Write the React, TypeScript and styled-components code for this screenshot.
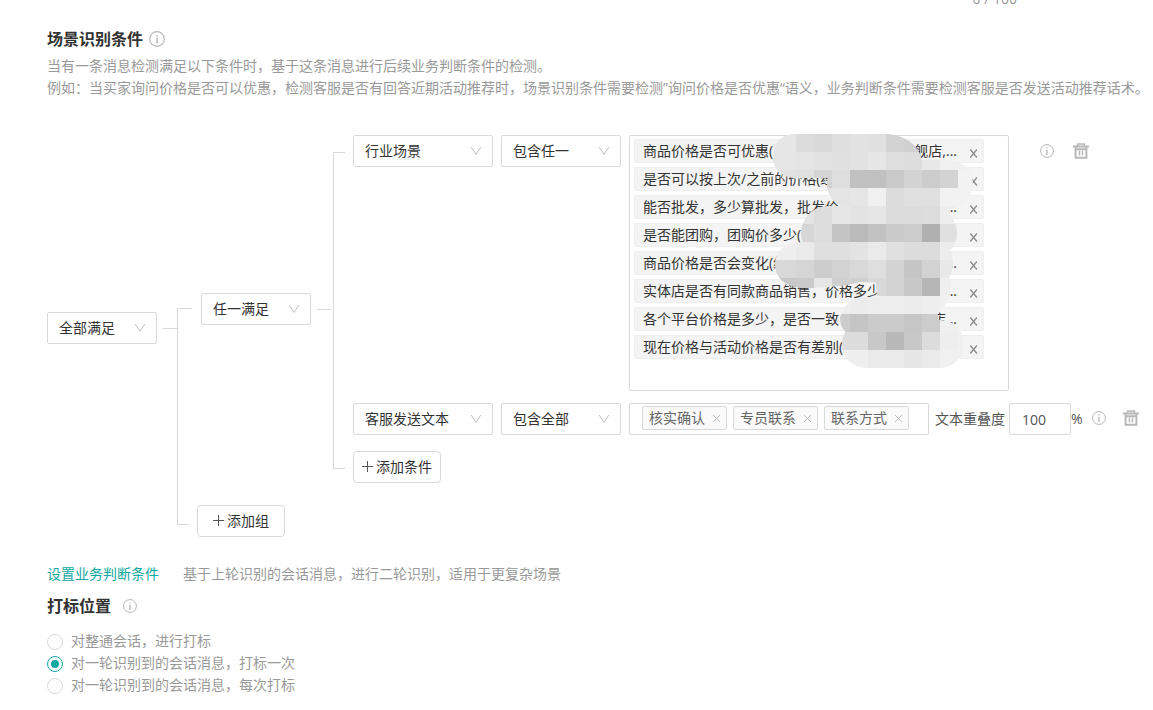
import React from "react";
import styled, { createGlobalStyle } from "styled-components";

const GlobalStyle = createGlobalStyle`
  * { box-sizing: border-box; }
  body {
    margin: 0;
    background: #fff;
    color: #333;
    font-family: "Open Sans", "Noto Sans CJK SC", sans-serif;
    font-size: 14px;
    line-height: 22px;
  }
  button, input, select { font: inherit; color: inherit; margin: 0; }
  h2, p { margin: 0; }
`;

const LINE = "#d9d9d9";
const TEAL = "#12a8a2";

const Page = styled.main`
  padding-left: 47px;
  overflow: hidden;
`;

const Counter = styled.div`
  max-width: 970px;
  margin: -12px 0 17px;
  text-align: right;
  color: #999;
`;

const Heading = styled.div<{ $gap: number }>`
  display: flex;
  align-items: center;
  gap: ${(p) => p.$gap}px;
  h2 {
    font-size: 16px;
    line-height: 24px;
    font-weight: 700;
  }
`;

const Hint = styled.p`
  color: #999;
`;

const Intro = styled.section`
  margin: 4px 0 36px;
`;

const Tree = styled.div`
  display: flex;
  align-items: center;
`;

const Operator = styled.div<{ $lift?: number }>`
  display: flex;
  align-items: center;
  gap: 6px;
  flex: none;
  padding-bottom: ${(p) => p.$lift ?? 0}px;
`;

const Dash = styled.span`
  width: 14px;
  height: 1px;
  background: ${LINE};
`;

const Bracket = styled.div<{ $top: number; $bottom: number; $hook: number }>`
  align-self: stretch;
  flex: none;
  display: flex;
  flex-direction: column;
  justify-content: space-between;
  width: ${(p) => p.$hook}px;
  margin: ${(p) => `${p.$top}px 0 ${p.$bottom}px`};
  border-left: 1px solid ${LINE};
  &::before, &::after {
    content: "";
    height: 1px;
    background: ${LINE};
  }
  &::after { width: 11px; }
`;

const Branches = styled.div`
  margin-left: 5px;
`;

const Group = styled.div`
  display: flex;
  align-items: center;
  padding-left: 4px;
  margin-bottom: 22px;
`;

const GroupBracket = styled(Bracket)`
  margin-left: 2px;
`;

const Rules = styled.div`
  display: flex;
  flex-direction: column;
  align-items: flex-start;
  gap: 12px;
  margin-left: 8px;
`;

const Rule = styled.div`
  display: flex;
  align-items: flex-start;
  gap: 8px;
`;

const SelectBox = styled.span<{ $width: number }>`
  position: relative;
  display: inline-flex;
  flex: none;
  width: ${(p) => p.$width}px;
  select {
    appearance: none;
    width: 100%;
    height: 32px;
    padding: 0 28px 0 11px;
    border: 1px solid ${LINE};
    border-radius: 2px;
    background: #fff;
  }
  svg {
    position: absolute;
    right: 11px;
    top: 10px;
    pointer-events: none;
  }
`;

const AddButton = styled.button`
  display: flex;
  align-items: center;
  justify-content: center;
  gap: 2px;
  width: 88px;
  height: 32px;
  padding: 0;
  border: 1px solid ${LINE};
  border-radius: 4px;
  background: #fff;
`;

const AddRule = styled(AddButton)`
  margin-top: 4px;
`;

const SceneBox = styled.div`
  position: relative;
  display: flex;
  flex-direction: column;
  gap: 4px;
  flex: none;
  width: 380px;
  min-height: 256px;
  padding: 3px 24px 3px 4px;
  border: 1px solid ${LINE};
  border-radius: 2px;
`;

const SceneTag = styled.div`
  display: flex;
  align-items: center;
  height: 24px;
  padding: 0 4px 0 8px;
  border: 1px solid #eee;
  border-radius: 2px;
  background: #f4f4f4;
  white-space: nowrap;
`;

const Tail = styled.span`
  margin-left: auto;
  margin-right: 11px;
`;

const IconButton = styled.button`
  display: inline-flex;
  align-items: center;
  justify-content: center;
  flex: none;
  padding: 0;
  border: 0;
  background: none;
`;

const SceneClose = styled(IconButton)`
  width: 11px;
  height: 22px;
  padding-top: 4px;
`;

const Redaction = styled.svg`
  position: absolute;
  left: 130px;
  top: -2px;
`;

const WordBox = styled.div`
  display: flex;
  align-items: flex-start;
  gap: 6px;
  flex: none;
  width: 300px;
  height: 32px;
  padding: 2px 12px;
  border: 1px solid ${LINE};
  border-radius: 2px;
`;

const WordTag = styled.span`
  display: flex;
  align-items: center;
  justify-content: space-between;
  width: 85px;
  height: 24px;
  padding: 0 5px 0 6px;
  border: 1px solid ${LINE};
  border-radius: 2px;
  background: #fafafa;
  color: #666;
`;

const Overlap = styled.div`
  display: flex;
  align-items: center;
  height: 32px;
  margin-left: -2px;
  color: #555;
  label { margin-right: 4px; }
  input {
    width: 62px;
    height: 32px;
    padding: 1px 12px 0;
    border: 1px solid ${LINE};
    border-radius: 2px;
    outline: none;
  }
`;

const Actions = styled.div<{ $start: number; $gap: number; $height: number }>`
  display: flex;
  align-items: center;
  gap: ${(p) => p.$gap}px;
  height: ${(p) => p.$height}px;
  margin-left: ${(p) => p.$start}px;
`;

const NextStep = styled.div`
  display: flex;
  gap: 24px;
  margin: 26px 0 9px;
  color: #999;
  a { color: ${TEAL}; text-decoration: none; }
`;

const Options = styled.div`
  margin-top: 12px;
`;

const Option = styled.label`
  display: flex;
  align-items: center;
  gap: 8px;
  color: #999;
  input {
    appearance: none;
    display: grid;
    place-items: center;
    width: 16px;
    height: 16px;
    margin-top: 2px;
    border: 1px solid ${LINE};
    border-radius: 50%;
    background: #fff;
  }
  input:checked { border-color: ${TEAL}; }
  input:checked::before {
    content: "";
    width: 8px;
    height: 8px;
    border-radius: 50%;
    background: ${TEAL};
  }
`;

const InfoIcon = ({ size = 14 }: { size?: number }) => (
  <svg width={size} height={size} viewBox="0 0 14 14" fill="none" stroke="#b5b5b5" aria-hidden="true">
    <circle cx="7" cy="7" r="6.4" />
    <path d="M7 3.4v1.4M7 6v4.6" strokeWidth="1.2" />
    <path d="M6 6.3h1M5.8 10.3h2.4" strokeWidth=".6" />
  </svg>
);

const TrashIcon = () => (
  <svg width="16" height="16" viewBox="0 0 16 16" fill="none" stroke="#b8b8b8" aria-hidden="true">
    <path d="M0 3.5h16" strokeWidth="2" />
    <path d="M4.7 3V1h6.6v2" strokeWidth="1.6" />
    <path d="M2.6 6.2h10.8v8.6H2.6zM2.6 3.5v3M13.4 3.5v3" strokeWidth="2" />
    <path d="M6.5 7.5v5M9.5 7.5v5" strokeWidth="1.5" />
  </svg>
);

const CrossIcon = ({ color }: { color: string }) => (
  <svg width="9" height="9" viewBox="0 0 9 9" stroke={color} aria-hidden="true">
    <path d="M.8.8l7.4 7.4M8.2.8L.8 8.2" />
  </svg>
);

const SceneCrossIcon = () => (
  <svg width="9" height="9" viewBox="0 0 9 9" stroke="#888" strokeWidth="1.2" aria-hidden="true">
    <path d="M1.3.5l6.6 8M7.9.5l-6.6 8" />
  </svg>
);

const PlusIcon = () => (
  <svg width="12" height="12" viewBox="0 0 12 12" stroke="#555" aria-hidden="true">
    <path d="M5.5 0v11M0 5.5h11" />
  </svg>
);

const Select = ({ label, value, width }: { label: string; value: string; width: number }) => (
  <SelectBox $width={width}>
    <select aria-label={label} defaultValue={value}>
      <option>{value}</option>
    </select>
    <svg width="12" height="12" viewBox="0 0 12 12" fill="none" stroke="#bfbfbf" aria-hidden="true">
      <path d="M1.2 2L6 9.4 10.8 2" />
    </svg>
  </SelectBox>
);

const scenes: [string, string][] = [
  ["商品价格是否可优惠(", "舰店,..."],
  ["是否可以按上次/之前的价格(经", ""],
  ["能否批发，多少算批发，批发价", ".."],
  ["是否能团购，团购价多少(", ""],
  ["商品价格是否会变化(经", "..."],
  ["实体店是否有同款商品销售，价格多少", "..."],
  ["各个平台价格是多少，是否一致", "店..."],
  ["现在价格与活动价格是否有差别(", ""],
];

const words = ["核实确认", "专员联系", "联系方式"];

/* One hex pair per 18px cell, row by row: the grey level of the mosaic. */
const mosaic = [
  "e6 e6 dc d8 de e2 e0 d3 d0 d4 ee ee",
  "e6 e6 e4 e2 e0 e2 e6 de dd e8 f0 f0",
  "e2 e2 e0 d4 de c0 c0 c9 d3 cc d3 f2",
  "e6 e6 e4 e2 e4 e6 f0 dc e0 e0 f2 f2",
  "e6 e6 e4 dd e6 e3 e6 dc dc dd ed f0",
  "dd dd d6 dd c4 ba c2 ca cc b0 e0 e8",
  "ee ee ea df df e3 ea e0 dc dc ec ee",
  "d8 d8 d5 cd d2 d8 de d3 c5 d2 e8 ee",
  "c6 c8 ca e6 cf cf d8 d2 c8 b6 ee ee",
  "ee ee ee ee ee ec ee ee ec ee f0 f0",
  "cc cc cc cc cc c5 cb cb c6 cc f0 f0",
  "dc dc dc dc dc dc c8 b8 c8 dc ee f0",
  "ee ee ee ee ee ee ea ea e6 ea f0 f0",
].map((row) => row.split(" "));

const Mosaic = () => (
  <Redaction width="216" height="234" viewBox="0 0 216 234" aria-hidden="true">
    <clipPath id="smear">
      <path d="M34 0H128C148 2 162 14 162 30L150 44H34A21 21 0 0 1 13 22A21 21 0 0 1 34 0Z" />
      <rect x="67" y="26" width="146" height="48" rx="24" />
      <path d="M84 64H190V100H84Z" />
      <rect x="41" y="72" width="156" height="54" rx="27" />
      <path d="M44 108H170Q193 108 193 128T176 152L100 148Q80 154 40 154Q15 150 15 130T44 108Z" />
      <path d="M118 130H170Q191 136 191 152T176 182H124Q112 160 118 130Z" />
      <path d="M104 163H176L180 200H90Q80 196 80 184Q84 166 104 163Z" />
      <rect x="82" y="186" width="122" height="48" rx="24" />
    </clipPath>
    <g clipPath="url(#smear)" shapeRendering="crispEdges">
      {mosaic.map((row, y) =>
        row.map((g, x) => (
          <rect key={`${x}-${y}`} x={x * 18} y={y * 18} width="18" height="18" fill={`#${g}${g}${g}`} />
        ))
      )}
    </g>
  </Redaction>
);

const RuleActions = ({ start, gap, height }: { start: number; gap: number; height: number }) => (
  <Actions $start={start} $gap={gap} $height={height}>
    <InfoIcon />
    <IconButton type="button" aria-label="删除">
      <TrashIcon />
    </IconButton>
  </Actions>
);

export default function App() {
  return (
    <>
      <GlobalStyle />
      <Page>
        <Counter>0 / 100</Counter>
        <Heading $gap={6}>
          <h2>场景识别条件</h2>
          <InfoIcon size={16} />
        </Heading>
        <Intro>
          <Hint>当有一条消息检测满足以下条件时，基于这条消息进行后续业务判断条件的检测。</Hint>
          <Hint>
            例如：当买家询问价格是否可以优惠，检测客服是否有回答近期活动推荐时，场景识别条件需要检测”询问价格是否优惠“语义，业务判断条件需要检测客服是否发送活动推荐话术。
          </Hint>
        </Intro>

        <Tree>
          <Operator $lift={16}>
            <Select label="组关系" value="全部满足" width={110} />
            <Dash />
          </Operator>
          <Bracket $top={173} $bottom={12} $hook={15} />
          <Branches>
            <Group>
              <Operator>
                <Select label="条件关系" value="任一满足" width={110} />
                <Dash />
              </Operator>
              <GroupBracket $top={17} $bottom={14} $hook={12} />
              <Rules>
                <Rule>
                  <Select label="条件类型" value="行业场景" width={140} />
                  <Select label="匹配方式" value="包含任一" width={120} />
                  <SceneBox>
                    {scenes.map(([text, tail]) => (
                      <SceneTag key={text}>
                        <span>{text}</span>
                        <Tail>{tail}</Tail>
                        <SceneClose type="button" aria-label="移除">
                          <SceneCrossIcon />
                        </SceneClose>
                      </SceneTag>
                    ))}
                    <Mosaic />
                  </SceneBox>
                  <RuleActions start={23} gap={19} height={32} />
                </Rule>
                <Rule>
                  <Select label="条件类型" value="客服发送文本" width={140} />
                  <Select label="匹配方式" value="包含全部" width={120} />
                  <WordBox>
                    {words.map((w) => (
                      <WordTag key={w}>
                        {w}
                        <IconButton type="button" aria-label={`移除${w}`}>
                          <CrossIcon color="#bbb" />
                        </IconButton>
                      </WordTag>
                    ))}
                  </WordBox>
                  <Overlap>
                    <label htmlFor="overlap">文本重叠度</label>
                    <input id="overlap" defaultValue="100" />
                    <span>%</span>
                  </Overlap>
                  <RuleActions start={1} gap={17} height={30} />
                </Rule>
                <AddRule type="button">
                  <PlusIcon />
                  添加条件
                </AddRule>
              </Rules>
            </Group>
            <AddButton type="button">
              <PlusIcon />
              添加组
            </AddButton>
          </Branches>
        </Tree>

        <NextStep>
          <a href="#judge">设置业务判断条件</a>
          <span>基于上轮识别的会话消息，进行二轮识别，适用于更复杂场景</span>
        </NextStep>

        <Heading $gap={12}>
          <h2>打标位置</h2>
          <InfoIcon />
        </Heading>
        <Options>
          <Option>
            <input type="radio" name="mark" />
            对整通会话，进行打标
          </Option>
          <Option>
            <input type="radio" name="mark" defaultChecked />
            对一轮识别到的会话消息，打标一次
          </Option>
          <Option>
            <input type="radio" name="mark" />
            对一轮识别到的会话消息，每次打标
          </Option>
        </Options>
      </Page>
    </>
  );
}
